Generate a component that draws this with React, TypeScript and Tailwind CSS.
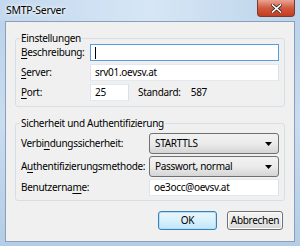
import React from 'react';

const font = { fontFamily: '"Noto Sans", "Liberation Sans", sans-serif' };

function U({ children }: { children: React.ReactNode }) {
  return <span className="underline underline-offset-2 decoration-[1px]">{children}</span>;
}

function TextBox({ value, focused, className }: { value: string; focused?: boolean; className: string }) {
  return (
    <div
      className={`h-[17px] bg-white border flex items-center pl-[4px] text-[10px] text-black ${
        focused ? 'border-[#569de5]' : 'border-[#abadb3] border-t-[#e3e9ef] border-l-[#e2e3ea] border-r-[#dbdfe6] border-b-[#e3e9ef]'
      } ${className}`}
    >
      {focused && <span className="w-px h-[12px] bg-black" />}
      {value}
    </div>
  );
}

function Combo({ value }: { value: string }) {
  return (
    <div className="w-[130px] h-[21px] rounded-[3px] border border-[#707070] bg-gradient-to-b from-[#f2f2f2] via-[#ebebeb] to-[#d5d5d5] flex items-center pl-[5px] pr-[6px] text-[10px] text-black">
      <span className="flex-1">{value}</span>
      <svg width="7" height="4" viewBox="0 0 7 4">
        <path d="M0 0h7L3.5 4z" fill="#000" />
      </svg>
    </div>
  );
}

function Group({ title, children, className }: { title: string; children: React.ReactNode; className: string }) {
  return (
    <fieldset className={`border border-[#d5dfe5] rounded-[3px] ml-[9px] mr-[10px] pl-[5px] pr-[5px] ${className}`}>
      <legend className="px-px ml-[-1px] text-[10px] leading-[14px] text-black">{title}</legend>
      {children}
    </fieldset>
  );
}

export default function App() {
  return (
    <div
      className="w-[300px] h-[246px] relative overflow-hidden bg-gradient-to-b from-[#b9d1ea] via-[#c9dcf0] to-[#b4cce6] flex flex-col tracking-[-0.3px]"
      style={font}
    >
      {/* title bar */}
      <div className="h-[21px] shrink-0 flex items-center pl-[6px] text-[10.5px] text-black bg-gradient-to-r from-[#c3d8ee] via-[#d6e6f5] to-[#bcd3ea]">
        <span className="[text-shadow:0_0_6px_#fff,0_0_3px_#fff]">SMTP-Server</span>
      </div>
      <div className="absolute left-[257px] top-0 w-[38px] h-[17px] rounded-b-[4px] border border-[#7a3a2c] border-t-0 bg-gradient-to-b from-[#e8a493] via-[#d1593e] to-[#c43c20] flex items-center justify-center">
        <svg width="11" height="9" viewBox="0 0 11 9">
          <path d="M1.5 1L9.5 8M9.5 1L1.5 8" stroke="#3b2a2a" strokeWidth="3.2" strokeLinecap="square" />
          <path d="M1.5 1L9.5 8M9.5 1L1.5 8" stroke="#fff" strokeWidth="1.6" strokeLinecap="square" />
        </svg>
      </div>

      {/* client area */}
      <div className="flex-1 mx-[5px] mb-[4px] border border-[#8aa0b8] bg-[#f0f0f0] flex flex-col pt-[9px]">
        <Group title="Einstellungen" className="h-[76px]">
          <div className="flex flex-col gap-[3px] mt-[-1px]">
            <div className="flex items-center">
              <span className="w-[69px] text-[10px] text-black"><U>B</U>eschreibung:</span>
              <TextBox value="" focused className="w-[189px]" />
            </div>
            <div className="flex items-center">
              <span className="w-[69px] text-[10px] text-black"><U>S</U>erver:</span>
              <TextBox value="srv01.oevsv.at" className="w-[189px]" />
            </div>
            <div className="flex items-center">
              <span className="w-[69px] text-[10px] text-black"><U>P</U>ort:</span>
              <TextBox value="25" className="w-[39px]" />
              <span className="ml-[9px] text-[10px] text-black">Standard:</span>
              <span className="ml-[10px] text-[10px] text-black">587</span>
            </div>
          </div>
        </Group>

        <Group title="Sicherheit und Authentifizierung" className="h-[85px] mt-[9px]">
          <div className="flex flex-col gap-[2px] mt-[3px]">
            <div className="flex items-center">
              <span className="w-[128px] text-[10px] text-black">Verbi<U>n</U>dungssicherheit:</span>
              <Combo value="STARTTLS" />
            </div>
            <div className="flex items-center">
              <span className="w-[128px] text-[10px] text-black">A<U>u</U>thentifizierungsmethode:</span>
              <Combo value="Passwort, normal" />
            </div>
            <div className="flex items-center">
              <span className="w-[128px] text-[10px] text-black">Benutzerna<U>m</U>e:</span>
              <TextBox value="oe3occ@oevsv.at" className="w-[130px]" />
            </div>
          </div>
        </Group>

        <div className="flex justify-end gap-[10px] mr-[11px] mt-[10px]">
          <button className="w-[59px] h-[19px] rounded-[3px] border border-[#3c7fb1] bg-gradient-to-b from-[#eaf6fd] via-[#d9f0fc] to-[#bee6fd] shadow-[inset_0_0_0_1px_#b5dff7] text-[10px] text-black">
            OK
          </button>
          <button className="w-[56px] h-[19px] rounded-[3px] border border-[#707070] bg-gradient-to-b from-[#f2f2f2] via-[#ebebeb] to-[#d5d5d5] shadow-[inset_0_0_0_1px_#fcfcfc] text-[10px] text-black">
            Abbrechen
          </button>
        </div>
      </div>
    </div>
  );
}
